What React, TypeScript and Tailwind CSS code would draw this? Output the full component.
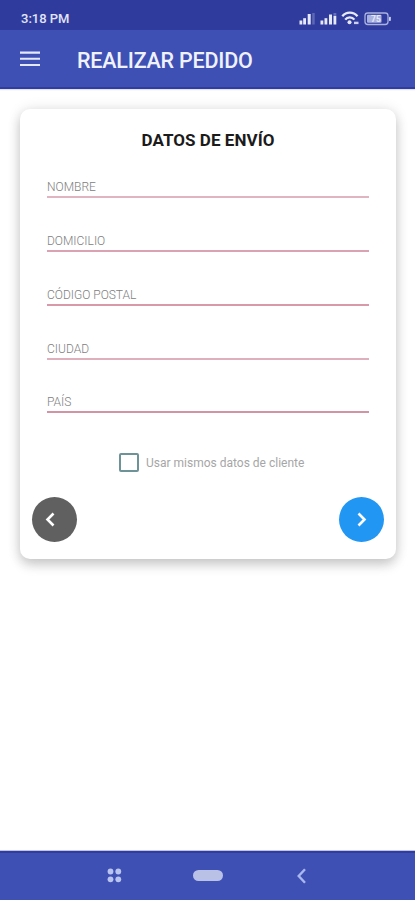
import React from "react";

const fields = [
  { label: "NOMBRE", line: "bg-[#e0b4c0]" },
  { label: "DOMICILIO", line: "bg-[#dba3b1]" },
  { label: "CÓDIGO POSTAL", line: "bg-[#d899a8]" },
  { label: "CIUDAD", line: "bg-[#deb0bc]" },
  { label: "PAÍS", line: "bg-[#d294a5]" },
];

function StatusIcons() {
  return (
    <svg width="96" height="18" viewBox="296 10 96 18" fill="none">
      <g fill="#e6e9fa">
        <rect x="299.5" y="20.5" width="2.8" height="4" />
        <rect x="303.2" y="18.2" width="2.8" height="6.3" />
        <rect x="307.7" y="14" width="3" height="10.5" />
        <rect x="312.2" y="13" width="2.5" height="11.5" opacity=".25" />
        <rect x="320.5" y="20.5" width="2.8" height="4" />
        <rect x="324.5" y="18.2" width="2.8" height="6.3" />
        <rect x="329" y="14.5" width="3" height="10" />
        <rect x="333.5" y="16" width="2.8" height="8.5" />
        <rect x="333.5" y="13" width="2.8" height="3" opacity=".3" />
        <circle cx="349.5" cy="22.3" r="2" />
        <rect x="354" y="21.7" width="4.5" height="2.4" opacity=".85" />
      </g>
      <path d="M342.3 16.2C346.3 11.3 353.3 11.3 357.5 16.2M345.2 19.6C347.5 16.6 352 16.6 354.4 19.6" stroke="#e6e9fa" strokeWidth="2.3" />
      <rect x="365" y="13" width="23" height="11.5" rx="2.8" stroke="#a9b1df" strokeWidth="1.3" />
      <rect x="367" y="14.8" width="14.5" height="8" rx="1" fill="#a9b1df" />
      <rect x="389" y="16.8" width="1.8" height="4.2" rx=".8" fill="#cdd3f3" />
      <text x="371" y="22" fontFamily="Roboto, sans-serif" fontSize="8.5" fontWeight="700" fill="#e5e8f8">75</text>
    </svg>
  );
}

export default function App() {
  return (
    <div className="flex h-[900px] w-[415px] flex-col overflow-hidden bg-white font-[Roboto,sans-serif]">
      <div className="flex h-[30px] shrink-0 items-start justify-between bg-[#303c9d] pr-[23px] pl-[21px]">
        <span className="mt-[10px] text-[13px] leading-[18px] font-medium whitespace-nowrap text-[#e2e5f8]">3:18 PM</span>
        <span className="mt-[10px] h-[18px]"><StatusIcons /></span>
      </div>
      <header className="flex h-[59px] shrink-0 items-center border-b-2 border-[#303d9f] bg-[#3f50b4] pl-[20px] shadow-[0_1px_1px_#dfe2f5]">
        <svg width="20" height="16" viewBox="0 0 20 16" className="mt-px">
          <path d="M0 1.6H20M0 7.8H20M0 14H20" stroke="#e3e8fc" strokeWidth="2.1" />
        </svg>
        <h1 className="ml-[37px] pt-[5px] text-[21.5px] leading-[28px] font-medium tracking-[-0.2px] whitespace-nowrap text-[#eff2fd]">REALIZAR PEDIDO</h1>
      </header>

      <main className="flex-1 pt-[20px] pr-[19px] pl-[20px]">
        <section className="flex h-[450px] flex-col rounded-[10px] bg-white pt-[19px] shadow-[0_6px_12px_rgba(0,0,0,0.18),0_0_14px_rgba(0,0,0,0.1)]">
          <h2 className="text-center text-[17px] leading-[24px] font-bold tracking-[0.05px] text-[#1b1b1b]">DATOS DE ENVÍO</h2>
          <div className="mt-[-7.5px] px-[27px]">
            {fields.map((field) => (
              <div key={field.label} className="flex h-[53.75px] flex-col justify-end">
                <span className="mb-px text-[12px] leading-[16px] font-light whitespace-nowrap text-[#808080]">{field.label}</span>
                <div className={"h-[2px] w-full " + field.line} />
              </div>
            ))}
          </div>
          <label className="mt-[39px] flex h-[21px] items-center pl-[99px]">
            <span className="h-[19px] w-[20px] rounded-[2px] border-2 border-[#6d9298]" />
            <span className="ml-[7px] pt-px text-[12px] leading-[18px] whitespace-nowrap text-[#a6a6a6]">Usar mismos datos de cliente</span>
          </label>
          <div className="mt-[24px] flex justify-between pr-[12px] pl-[12px]">
            <button aria-label="Anterior" className="flex h-[45px] w-[45px] items-center justify-center rounded-full bg-[#606060]">
              <svg width="45" height="45" viewBox="0 0 45 45" fill="none">
                <path d="M21.5 16.5L15.5 22.5L21.5 28.5" stroke="white" strokeWidth="2.6" />
              </svg>
            </button>
            <button aria-label="Siguiente" className="flex h-[45px] w-[45px] items-center justify-center rounded-full bg-[#2196f3]">
              <svg width="45" height="45" viewBox="0 0 45 45" fill="none">
                <path d="M19.5 16.5L25.5 22.5L19.5 28.5" stroke="white" strokeWidth="2.6" />
              </svg>
            </button>
          </div>
        </section>
      </main>

      <nav className="flex h-[49px] shrink-0 items-center border-t-2 border-[#303d9f] bg-[#3f50b4] pb-[2px] pl-[107px] shadow-[0_-1px_0_#bfc5e8]">
        <svg width="15" height="15" viewBox="0 0 15 15" fill="#b9c4ef">
          <circle cx="3.5" cy="3.5" r="2.9" />
          <circle cx="11.3" cy="3.5" r="2.9" />
          <circle cx="3.5" cy="11.3" r="2.9" />
          <circle cx="11.3" cy="11.3" r="2.9" />
        </svg>
        <span className="ml-[71px] h-[11px] w-[30px] rounded-full bg-[#b9c1e7]" />
        <svg width="11" height="16" viewBox="0 0 11 16" fill="none" className="ml-[73px]">
          <path d="M9 1.2L2.7 8L9 14.8" stroke="#a9b7ee" strokeWidth="2.4" />
        </svg>
      </nav>
    </div>
  );
}
